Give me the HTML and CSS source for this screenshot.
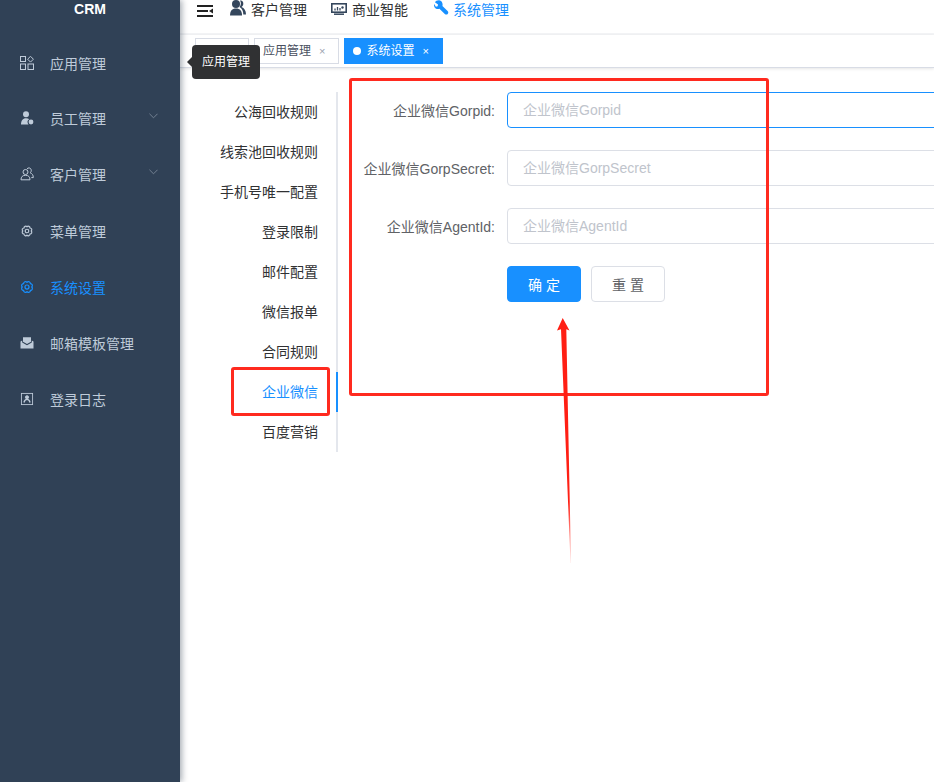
FILE: index.html
```html
<!DOCTYPE html>
<html lang="zh-CN">
<head>
<meta charset="utf-8">
<title>CRM</title>
<link rel="stylesheet" href="styles.css">
</head>
<body>
<div class="app">
  <aside class="sidebar">
    <div class="logo">CRM</div>
    <ul class="menu">
      <li class="menu-item">
        <svg class="mi" viewBox="0 0 14 14" fill="none" stroke="currentColor"><rect x=".5" y=".5" width="5" height="5"/><path d="M10.500.3l2.900 2.900-2.900 2.900-2.900-2.900z"/><rect x=".5" y="8" width="5" height="5.500"/><rect x="8" y="8" width="5.500" height="5.500"/></svg>
        <span>应用管理</span>
      </li>
      <li class="menu-item sub">
        <svg class="mi" viewBox="0 0 14 14" fill="currentColor"><circle cx="6" cy="3.300" r="3"/><path d="M1 13.500c0-4 1.800-6.300 5-6.300 1.400 0 2.500.4 3.300 1.100-1.300.6-1.800 1.500-1.800 2.700 0 1 .4 1.800 1 2.500z"/><circle cx="11" cy="11" r="2.400"/></svg>
        <span>员工管理</span>
        <svg class="chev" viewBox="0 0 10 6" fill="none" stroke="currentColor"><path d="M.5.5l4.500 4.500 4.500-4.500"/></svg>
      </li>
      <li class="menu-item sub">
        <svg class="mi" viewBox="0 0 14 14" fill="none" stroke="currentColor"><circle cx="5.500" cy="5" r="2.500"/><path d="M1 12.800c0-3 1.500-4.500 4.500-4.500s4.500 1.500 4.500 4.500z"/><path d="M7 1.800c1-1.400 3.800-1.200 4.200 1 .3 1.400-.3 2.400-1 3 2 .8 3.100 2.300 3.100 4.800h-2"/></svg>
        <span>客户管理</span>
        <svg class="chev" viewBox="0 0 10 6" fill="none" stroke="currentColor"><path d="M.5.5l4.500 4.500 4.500-4.500"/></svg>
      </li>
      <li class="menu-item">
        <svg class="mi" viewBox="-2 -2 18 18" fill="none" stroke="currentColor" stroke-width="1.500"><path d="M12.500 7A2.300 2.300 0 0 1 10.900 10.900A2.300 2.300 0 0 1 7 12.500A2.300 2.300 0 0 1 3.100 10.900A2.300 2.300 0 0 1 1.500 7A2.300 2.300 0 0 1 3.100 3.100A2.300 2.300 0 0 1 7 1.500A2.300 2.300 0 0 1 10.900 3.100A2.300 2.300 0 0 1 12.500 7z"/><circle cx="7" cy="7" r="2.300"/></svg>
        <span>菜单管理</span>
      </li>
      <li class="menu-item active">
        <svg class="mi" viewBox="-1 -1 16 16" fill="none" stroke="currentColor" stroke-width="1.400"><path d="M12.500 7A2.300 2.300 0 0 1 10.900 10.900A2.300 2.300 0 0 1 7 12.500A2.300 2.300 0 0 1 3.100 10.900A2.300 2.300 0 0 1 1.500 7A2.300 2.300 0 0 1 3.100 3.100A2.300 2.300 0 0 1 7 1.500A2.300 2.300 0 0 1 10.900 3.100A2.300 2.300 0 0 1 12.500 7z"/><circle cx="7" cy="7" r="2.300"/></svg>
        <span>系统设置</span>
      </li>
      <li class="menu-item">
        <svg class="mi" viewBox="0 0 14 12" fill="currentColor"><path d="M3 .3h8v4.500L7 7 3 4.800z"/><path d="M.5 4.500l1.700-1v2L7 8.300l4.800-2.800v-2l1.700 1v7H.5z"/></svg>
        <span>邮箱模板管理</span>
      </li>
      <li class="menu-item">
        <svg class="mi" viewBox="-1 -1 16 16" fill="none" stroke="currentColor"><rect x=".6" y=".6" width="12.800" height="12.800"/><circle cx="7" cy="5" r="1.800" fill="currentColor"/><path d="M3.500 11c.5-2.300 1.800-3.500 3.500-3.500s3 1.200 3.500 3.500" stroke-width="1.500"/></svg>
        <span>登录日志</span>
      </li>
    </ul>
  </aside>

  <main class="main">
    <header class="topbar">
      <svg class="burger" viewBox="0 0 16 12"><path d="M0 1h16M0 6h11M0 11h16" stroke="#222" stroke-width="1.800"/><path d="M16 3.500v5L12 6z" fill="#222"/></svg>
      <nav class="topnav">
        <a class="topnav-item">
          <svg viewBox="0 0 16 16" fill="#34465c"><circle cx="6" cy="4" r="4"/><path d="M0 15.500c0-4.500 2-7 6-7s6 2.500 6 7z"/><path d="M10 .5c2-.5 3.500 1 3.300 3.500-.1 1.300-.8 2.500-1.800 3 2.800 1 4.500 3.500 4.500 7.500h-2.700c0-3.500-1.300-6.200-3.800-7.500 1.700-1.800 1.800-4.800.5-6.500z"/></svg>
          <span>客户管理</span>
        </a>
        <a class="topnav-item">
          <svg class="ico-bi" viewBox="0 0 16 12" fill="none"><rect x=".8" y=".8" width="14.400" height="8.400" fill="#fff" stroke="#34465c" stroke-width="1.600"/><path d="M4 7.500V5.500M6.500 7.500V4M9 7.500V5" stroke="#34465c" stroke-width="1.300"/><circle cx="11.500" cy="4.500" r="1.200" fill="#34465c"/><path d="M3 11.200h10" stroke="#34465c" stroke-width="1.500"/></svg>
          <span>商业智能</span>
        </a>
        <a class="topnav-item current">
          <svg class="ico-wr" viewBox="0 0 16 16" fill="#1890ff"><path d="M6.300.5C4 0 1.800 1 1 2.500l3.300 2.300-.4 1.900-1.900.4L.2 4.200C-.4 6 .3 8 1.800 9c1.300.8 2.800.8 4 .3l5.700 5.500c.9.900 2.200 1 3.100.1.900-.9.800-2.200-.1-3.100L9 6.300c.6-2.800-.4-5-2.700-5.800z"/></svg>
          <span>系统管理</span>
        </a>
      </nav>
    </header>

    <div class="tabs">
      <a class="tab tab-home"></a>
      <a class="tab tab-app">应用管理<i class="close">×</i></a>
      <a class="tab tab-on"><b class="dot"></b>系统设置<i class="close">×</i></a>
    </div>

    <section class="content">
      <ul class="side-tabs">
        <li>公海回收规则</li>
        <li>线索池回收规则</li>
        <li>手机号唯一配置</li>
        <li>登录限制</li>
        <li>邮件配置</li>
        <li>微信报单</li>
        <li>合同规则</li>
        <li class="on">企业微信</li>
        <li>百度营销</li>
      </ul>
      <form class="form">
        <div class="row">
          <label class="lbl">企业微信Gorpid:</label>
          <input class="inp focus" type="text" placeholder="企业微信Gorpid">
        </div>
        <div class="row">
          <label class="lbl">企业微信GorpSecret:</label>
          <input class="inp" type="text" placeholder="企业微信GorpSecret">
        </div>
        <div class="row">
          <label class="lbl">企业微信AgentId:</label>
          <input class="inp" type="text" placeholder="企业微信AgentId">
        </div>
        <div class="row actions">
          <span class="lbl"></span>
          <button class="btn primary" type="button">确 定</button>
          <button class="btn" type="button">重 置</button>
        </div>
      </form>
    </section>
  </main>
</div>

<div class="tooltip">应用管理</div>
<div class="mark mark-form"></div>
<div class="mark mark-tab"></div>
<svg class="arrow" viewBox="0 0 20 250">
  <defs>
    <linearGradient id="fade" x1="0" y1="0" x2="0" y2="1">
      <stop offset="0" stop-color="#ff1f14"/>
      <stop offset=".75" stop-color="#ff1f14"/>
      <stop offset="1" stop-color="#ff1f14" stop-opacity=".1"/>
    </linearGradient>
  </defs>
  <path d="M6.700 0L13.500 12.500 10.300 11.300 15 245 14.500 245 5 11.300 1 12.500z" fill="url(#fade)"/>
</svg>
</body>
</html>
```
FILE: styles.css
```css
* { box-sizing: border-box; }
html, body { margin: 0; height: 100%; overflow: hidden; background: #fff; }
body {
  font-family: "Liberation Sans", "Noto Sans CJK SC", sans-serif;
  font-size: 14px;
  color: #303133;
}
ul { list-style: none; margin: 0; padding: 0; }

.app { display: flex; height: 782px; }

.sidebar {
  width: 180px;
  flex: none;
  background: #304156;
  color: #bfcbd9;
  box-shadow: 2px 0 6px rgba(0, 21, 41, .35);
  position: relative;
  z-index: 2;
}
.logo {
  height: 35px;
  padding-bottom: 17px;
  line-height: 18px;
  text-align: center;
  font-weight: 700;
  font-size: 14px;
  color: #fff;
}
.menu-item {
  height: 56px;
  display: flex;
  align-items: center;
  padding-left: 20px;
}
.menu-item.sub { padding-bottom: 2px; }
.menu-item.active { color: #1890ff; }
.mi { width: 14px; height: 14px; flex: none; margin-right: 16px; }
.chev { width: 9px; height: 6px; margin-left: auto; margin-right: 22px; margin-bottom: 4px; color: #7a8899; }

.main { flex: 1; min-width: 0; display: flex; flex-direction: column; }

.topbar {
  height: 35px;
  flex: none;
  display: flex;
  padding-left: 17px;
  border-bottom: 2px solid #f3f4f6;
}
.burger { width: 16px; height: 12px; margin-top: 5px; margin-right: 17px; }
.topnav { display: flex; gap: 24px; }
.topnav-item { display: flex; align-items: flex-start; gap: 5px; line-height: 20px; height: 20px; color: #303133; }
.topnav-item svg { width: 16px; height: 16px; }
.topnav-item .ico-bi { height: 12px; margin-top: 3px; }
.topnav-item .ico-wr { width: 15px; height: 15px; }
.topnav-item.current { color: #1890ff; margin-left: 1px; gap: 4px; }
.topnav-item.current .ico-wr { margin-left: 1px; }

.tabs {
  height: 33px;
  flex: none;
  display: flex;
  gap: 5px;
  padding: 3px 0 0 15px;
  border-bottom: 1px solid #d8dce5;
  box-shadow: 0 1px 3px rgba(0, 0, 0, .1);
}
.tab {
  height: 26px;
  line-height: 24px;
  padding: 0 8px;
  font-size: 12px;
  border: 1px solid #d8dce5;
  color: #495060;
  background: #fff;
  display: flex;
  align-items: center;
}
.tab-home { width: 54px; }
.tab-app { padding-right: 13px; }
.close { font-style: normal; font-size: 11px; color: #9aa3af; margin-left: 8px; }
.tab-on { background: #1890ff; border-color: #1890ff; color: #fff; padding-right: 13px; }
.tab-on .close { color: #fff; }
.dot { width: 8px; height: 8px; border-radius: 50%; background: #fff; margin-right: 5px; }

.content { flex: 1; display: flex; padding: 24px 0 0 10px; }

.side-tabs {
  width: 148px;
  flex: none;
  align-self: flex-start;
  border-right: 2px solid #e4e7ed;
}
.side-tabs li {
  height: 40px;
  line-height: 40px;
  text-align: right;
  padding-right: 18px;
  margin-right: -2px;
  color: #303133;
  border-right: 2px solid transparent;
}
.side-tabs li.on { color: #1890ff; border-right-color: #1890ff; }

.form { margin-left: 12px; }
.row { display: flex; align-items: center; height: 36px; margin-bottom: 22px; }
.lbl { width: 145px; flex: none; text-align: right; color: #606266; margin-right: 12px; white-space: nowrap; }
.inp {
  width: 600px;
  height: 36px;
  padding: 0 15px;
  border: 1px solid #dcdfe6;
  border-radius: 4px;
  font: inherit;
  outline: none;
  color: #606266;
}
.inp::placeholder { color: #c0c4cc; opacity: 1; }
.inp.focus { border-color: #1890ff; }
.btn {
  width: 74px;
  height: 36px;
  border: 1px solid #dcdfe6;
  border-radius: 4px;
  background: #fff;
  color: #606266;
  font: inherit;
  padding: 0;
}
.btn.primary { background: #1890ff; border-color: #1890ff; color: #fff; margin-right: 10px; }

.tooltip {
  position: absolute;
  left: 192px;
  top: 45px;
  width: 68px;
  height: 34px;
  line-height: 34px;
  text-align: center;
  font-size: 12px;
  color: #fff;
  background: #303133;
  border-radius: 4px;
  z-index: 5;
}
.tooltip::before {
  content: "";
  position: absolute;
  left: -5px;
  top: 12px;
  border: 5px solid transparent;
  border-left: 0;
  border-right-color: #303133;
}
.mark {
  position: absolute;
  border: 3px solid #ff2a1f;
  border-radius: 3px;
  z-index: 6;
}
.mark-form { left: 349px; top: 78px; width: 420px; height: 318px; }
.mark-tab { left: 231px; top: 367px; width: 99px; height: 49px; }
.arrow { position: absolute; left: 556px; top: 318px; width: 20px; height: 250px; z-index: 6; }
```
